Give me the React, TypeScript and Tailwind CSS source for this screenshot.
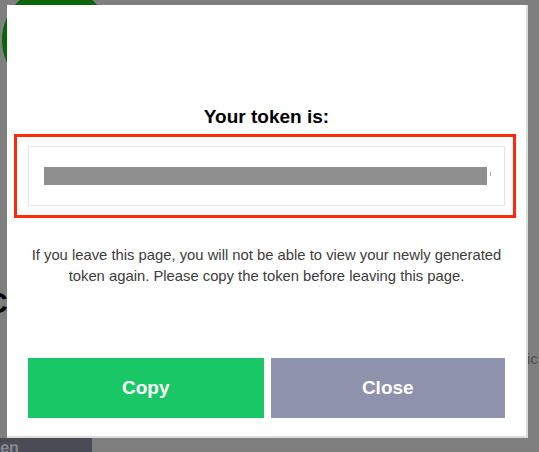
import React from "react";

export default function App() {
  return (
    <div
      className="relative w-[539px] h-[452px] overflow-hidden bg-[#7f7f7f]"
      style={{ fontFamily: '"Liberation Sans", Arial, sans-serif' }}
    >
      {/* dimmed page behind the dialog */}
      <div className="absolute left-[2px] top-[-14px] w-[108px] h-[108px] rounded-full bg-[#0a640a]" />
      <div className="absolute left-[-14px] top-[286px] text-[30px] font-bold leading-[34px] text-black">
        C
      </div>
      <div className="absolute left-[-8px] top-[322px] text-[14px] leading-[18px] text-[#555]">
        o
      </div>
      <div className="absolute left-[527px] top-[350px] text-[15px] leading-[18px] text-[#4e4e4e]">
        ic
      </div>
      <div className="absolute left-0 top-[438px] w-[92px] h-[20px] bg-[#4b4b55] pt-[2px] leading-[16px]">
        <span className="ml-[-22px] text-[16px] leading-[16px] font-bold text-[#8a8a92]">Open</span>
      </div>

      {/* dialog */}
      <div className="absolute left-[7px] top-[5px] w-[521px] h-[433px] bg-white border-r-2 border-b-2 border-[#dcdcdc] flex flex-col">
        <h2 className="pt-[100px] text-center text-[19px] font-bold leading-[23px] text-black">
          Your token is:
        </h2>
        <div className="mt-[6px] ml-[7px] w-[502px] border-[3px] border-[#ff2a0c] pt-[9px] pb-[9px] pl-[11px] pr-[8px]">
          <div className="h-[60px] border border-[#e6e6e6] flex items-center pl-[15px] pr-[4px]">
            <div className="h-[18px] w-[443px] bg-[#8f8f8f]" />
            <div className="ml-[3px] mt-[-4px] h-[4px] w-[1px] bg-[#b9a0a0]" />
          </div>
        </div>
        <p className="mt-[27px] px-[22px] text-center text-[14.8px] leading-[21px] text-[#3c3c3c]">
          If you leave this page, you will not be able to view your newly generated token again.
          Please copy the token before leaving this page.
        </p>
        <div className="mt-[71px] flex gap-[7px] pl-[21px] pr-[21px]">
          <button className="h-[60px] w-[236px] bg-[#1ac766] text-white text-[19px] font-bold">
            Copy
          </button>
          <button className="h-[60px] w-[235px] bg-[#8f92ad] text-white text-[19px] font-bold">
            Close
          </button>
        </div>
      </div>
    </div>
  );
}
